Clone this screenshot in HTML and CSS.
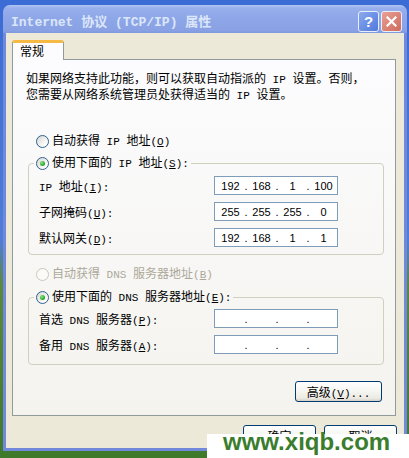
FILE: index.html
```html
<!DOCTYPE html>
<html lang="zh-CN">
<head>
  <meta charset="UTF-8" />
  <title>Internet 协议 (TCP/IP) 属性</title>
  <link rel="stylesheet" href="styles.css">
</head>
<body>

<div class="window">
  <div class="titlebar">
    <span class="title"><span class="lat">Internet </span>协议<span class="lat"> (TCP/IP) </span>属性</span>
    <div class="caption-btns">
      <span class="cbtn cbtn-help">?</span>
      <span class="cbtn cbtn-close">
        <svg width="11" height="11" viewBox="0 0 11 11"><path d="M1.5 1.5 L9.5 9.5 M9.5 1.5 L1.5 9.5" stroke="#fff" stroke-width="2.2" stroke-linecap="square"/></svg>
      </span>
    </div>
  </div>

  <div class="client">
    <div class="tabs"><div class="tab">常规</div></div>

    <div class="panel">
      <p class="intro">如果网络支持此功能，则可以获取自动指派的<span class="lat"> IP </span>设置。否则，<br>您需要从网络系统管理员处获得适当的<span class="lat"> IP </span>设置。</p>

      <div class="opt opt-row opt-first">
        <span class="radio"></span>
        <span>自动获得<span class="lat"> IP </span>地址<span class="lat">(<u>O</u>)</span></span>
      </div>

      <fieldset class="group group-ip">
        <legend>
          <span class="opt"><span class="radio checked"></span><span>使用下面的<span class="lat"> IP </span>地址<span class="lat">(<u>S</u>):</span></span></span>
        </legend>
        <div class="field">
          <label><span class="lat">IP </span>地址<span class="lat">(<u>I</u>):</span></label>
          <div class="ip"><span class="oct">192</span><span class="dot">.</span><span class="oct">168</span><span class="dot">.</span><span class="oct">1</span><span class="dot">.</span><span class="oct">100</span></div>
        </div>
        <div class="field">
          <label>子网掩码<span class="lat">(<u>U</u>):</span></label>
          <div class="ip"><span class="oct">255</span><span class="dot">.</span><span class="oct">255</span><span class="dot">.</span><span class="oct">255</span><span class="dot">.</span><span class="oct">0</span></div>
        </div>
        <div class="field">
          <label>默认网关<span class="lat">(<u>D</u>):</span></label>
          <div class="ip"><span class="oct">192</span><span class="dot">.</span><span class="oct">168</span><span class="dot">.</span><span class="oct">1</span><span class="dot">.</span><span class="oct">1</span></div>
        </div>
      </fieldset>

      <div class="opt opt-row opt-disabled">
        <span class="radio"></span>
        <span>自动获得<span class="lat"> DNS </span>服务器地址<span class="lat">(<u>B</u>)</span></span>
      </div>

      <fieldset class="group group-dns">
        <legend>
          <span class="opt"><span class="radio checked"></span><span>使用下面的<span class="lat"> DNS </span>服务器地址<span class="lat">(<u>E</u>):</span></span></span>
        </legend>
        <div class="field">
          <label>首选<span class="lat"> DNS </span>服务器<span class="lat">(<u>P</u>):</span></label>
          <div class="ip"><span class="oct"></span><span class="dot">.</span><span class="oct"></span><span class="dot">.</span><span class="oct"></span><span class="dot">.</span><span class="oct"></span></div>
        </div>
        <div class="field">
          <label>备用<span class="lat"> DNS </span>服务器<span class="lat">(<u>A</u>):</span></label>
          <div class="ip"><span class="oct"></span><span class="dot">.</span><span class="oct"></span><span class="dot">.</span><span class="oct"></span><span class="dot">.</span><span class="oct"></span></div>
        </div>
      </fieldset>

      <div class="adv-row">
        <button class="btn btn-adv">高级<span class="lat">(<u>V</u>)...</span></button>
      </div>
    </div>

    <div class="actions">
      <button class="btn">确定</button>
      <button class="btn">取消</button>
    </div>
  </div>
</div>

<div class="watermark">www.xiqb.com</div>

</body>
</html>
```

FILE: styles.css
```css
body {
  margin: 0;
  width: 409px;
  height: 458px;
  overflow: hidden;
  position: relative;
  font-family: "Noto Sans CJK SC", sans-serif;
  font-size: 12px;
  color: #000;
  background: linear-gradient(#3b6bd4 0, #4f7dd8 240px, #5a8a3a 285px, #3e7a2a 100%);
}

.lat {
  font-family: "Liberation Mono", monospace;
  font-size: 11px;
}

/* window frame */
.window {
  margin: 5px 0 0 3px;
  width: 404px;
  height: 446px;
  display: flex;
  flex-direction: column;
  background: #7189da;
  border-radius: 7px 7px 0 0;
}

.titlebar {
  height: 28px;
  flex-shrink: 0;
  display: flex;
  justify-content: space-between;
  padding: 0 5px 0 8px;
  border-radius: 7px 7px 0 0;
  background: linear-gradient(#b3c5f2, #98afec 3px, #8da6e8 50%, #8aa2e4 90%, #7f98df);
}

.title {
  color: #dce6f9;
  font-weight: bold;
  font-size: 13px;
  line-height: 24px;
  padding-top: 4px;
  white-space: nowrap;
}

.title .lat {
  font-size: 13px;
}

.caption-btns {
  display: flex;
  gap: 2px;
  padding-top: 6px;
}

.cbtn {
  width: 21px;
  height: 21px;
  box-sizing: border-box;
  border: 1px solid #e8eefb;
  border-radius: 3px;
  display: flex;
  align-items: center;
  justify-content: center;
}

.cbtn-help {
  background: linear-gradient(135deg, #8aa9ee, #5079dc);
  color: #fff;
  font: bold 15px "Liberation Sans", sans-serif;
}

.cbtn-close {
  background: linear-gradient(135deg, #e8a095, #cf6a5c);
}

.client {
  flex: 1;
  margin: 0 3px 3px;
  padding: 7px 8px 0 6px;
  background-color: #ece9d8;
}

/* tab */
.tabs {
  height: 19px;
  display: flex;
}

.tab {
  position: relative;
  z-index: 1;
  width: 52px;
  height: 20px;
  box-sizing: border-box;
  padding: 1px 0 0 7px;
  line-height: 14px;
  background-color: #fcfcfe;
  border: 1px solid #919b9c;
  border-top: 3px solid #f5b944;
  border-bottom: none;
  border-radius: 3px 3px 0 0;
}

.panel {
  border: 1px solid #919b9c;
  background: linear-gradient(#fcfcfe, #f4f3ee);
  padding-bottom: 13px;
}

.intro {
  margin: 11px 0 0 13px;
  height: 26px;
  line-height: 13px;
  white-space: nowrap;
}

/* radio options */
.opt {
  display: flex;
  align-items: center;
  gap: 3px;
  height: 14px;
  line-height: 14px;
  white-space: nowrap;
}

.opt-row {
  margin-left: 23px;
}

.opt-first {
  margin-top: 37px;
}

.opt-disabled {
  margin-top: 12px;
  color: #aca899;
}

.radio {
  width: 13px;
  height: 13px;
  box-sizing: border-box;
  border: 1px solid #2f5f8f;
  border-radius: 50%;
  background: linear-gradient(135deg, #d6d6d0, #fff 80%);
  display: flex;
  align-items: center;
  justify-content: center;
  flex-shrink: 0;
}

.radio.checked::after {
  content: "";
  width: 5px;
  height: 5px;
  border-radius: 50%;
  background: radial-gradient(circle at 35% 35%, #8ee28a, #21a121 70%);
}

.opt-disabled .radio {
  border-color: #cac8bb;
  background: #fbfbf9;
}

/* group boxes */
.group {
  margin: 8px 11px 0 15px;
  padding: 6px 0 7px;
  border: 1px solid #d0d0bf;
  border-radius: 4px;
  min-width: 0;
}

.group legend {
  margin-left: 5px;
  padding: 0 2px;
  height: 14px;
}

.group-dns {
  margin-top: 9px;
  padding: 5px 0 10px;
}

.field {
  display: grid;
  grid-template-columns: 175px 124px;
  align-items: center;
  height: 19px;
  padding-left: 10px;
  white-space: nowrap;
}

.field + .field {
  margin-top: 7px;
}

.ip {
  display: flex;
  align-items: center;
  height: 19px;
  box-sizing: border-box;
  padding-left: 2px;
  border: 1px solid #7f9db9;
  background-color: #fff;
  font-family: "Liberation Sans", sans-serif;
  font-size: 11px;
}

.oct {
  width: 27px;
  text-align: center;
}

.dot {
  width: 4px;
  text-align: center;
}

/* buttons */
.btn {
  height: 21px;
  padding: 0;
  border: 1px solid #003c74;
  border-radius: 3px;
  background: linear-gradient(#fff, #f5f5f1 50%, #ebeae3 85%, #d6d0c5);
  font-family: "Noto Sans CJK SC", sans-serif;
  font-size: 12px;
  line-height: 19px;
  color: #000;
}

.adv-row {
  display: flex;
  justify-content: flex-end;
  margin: 16px 13px 0 0;
}

.btn-adv {
  width: 87px;
}

.actions {
  display: flex;
  justify-content: flex-end;
  gap: 8px;
  margin: 9px -1px 0 0;
}

.actions .btn {
  width: 73px;
}

.watermark {
  position: absolute;
  left: 207px;
  top: 434px;
  width: 202px;
  height: 24px;
  box-sizing: border-box;
  padding-left: 16px;
  background-color: #fff;
  color: #3a7d2c;
  font: bold 24px "Liberation Sans", sans-serif;
  line-height: 16px;
}
```
